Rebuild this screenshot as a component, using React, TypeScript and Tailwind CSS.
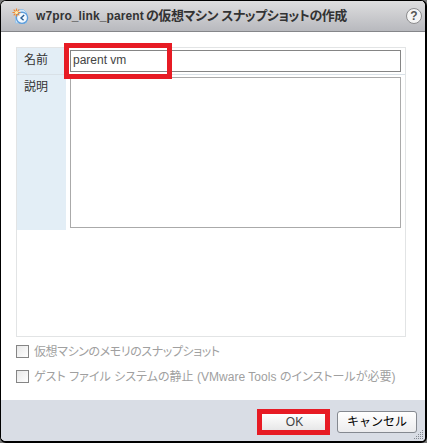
import type { ReactNode } from 'react';

function SnapshotIcon() {
  return (
    <svg width="17" height="17" viewBox="0 0 17 17" className="shrink-0">
      <path d="M6 1.5h5.5l3 3V15H3.5V7" fill="#d3e7f8" stroke="#9cc5e8" />
      <circle cx="10" cy="9.8" r="5.6" fill="#f2f9ff" stroke="#5d9ddb" strokeWidth="1.4" />
      <path d="M12.2 7 9 9.9l2.6 2.3" fill="none" stroke="#2c5f94" strokeWidth="1.4" />
      <path d="M4.5.5v8M.5 4.5h8M1.7 1.7l5.6 5.6M7.3 1.7 1.7 7.3" stroke="#ee8730" strokeWidth="1.2" />
      <circle cx="4.5" cy="4.5" r="1.6" fill="#fff0b0" />
    </svg>
  );
}

function Option({ children }: { children: ReactNode }) {
  return (
    <label className="flex h-[13px] items-center whitespace-nowrap text-[12px] text-[#a0a0a0] [font-feature-settings:'palt']">
      <span className="mr-[5px] size-[13px] shrink-0 border border-[#858585] bg-linear-to-br from-[#e8e8e8] to-white" />
      {children}
    </label>
  );
}

export default function App() {
  return (
    <div className="h-[443px] w-[427px] overflow-hidden bg-[#777] font-['Liberation_Sans','Noto_Sans_CJK_JP',sans-serif]">
      <div className="flex h-[443px] w-[427px] flex-col overflow-hidden rounded-[6px] border border-r-2 border-b-2 border-black bg-white">
        <header className="flex h-[31px] shrink-0 items-center border-b border-[#85868a] bg-linear-to-b from-[#dededf] to-[#b8b9be] pr-[3px] pl-[11px]">
          <SnapshotIcon />
          <h1 className="ml-[7px] flex whitespace-nowrap text-[12px] leading-[18px] font-bold text-[#333]">
            <span className="w-[110px] tracking-[0.1px]">w7pro_link_parent</span>
            <span className="text-[13px] tracking-[-0.45px] [font-feature-settings:'palt']">の仮想マシン スナップショットの作成</span>
          </h1>
          <span className="ml-auto flex size-[16px] items-center justify-center rounded-full border border-[#8b8b8d] bg-[#f5f5f5] text-[12px] leading-none font-bold text-[#555]">?</span>
        </header>

        <main className="h-[368px] shrink-0 pt-[15px] pl-[15px]">
          <div className="h-[290px] w-[390px] border border-[#e2e4e5]">
            <div className="flex h-[27px] border-b border-[#d9e1e7]">
              <span className="w-[49px] bg-[#e3eef6] pl-[7px] text-[12px] leading-[24px] text-[#333]">名前</span>
              <div className="relative ml-[4px] pt-[2px]">
                <div className="h-[22px] w-[331px] border border-[#858585] pl-[2px] text-[12px] leading-[18px] text-[#444]">parent vm</div>
                <div className="absolute top-[-5px] left-[-6px] h-[36px] w-[108px] border-[5px] border-[#e71b24]" />
              </div>
            </div>
            <div className="flex h-[155px]">
              <span className="w-[49px] bg-[#e3eef6] pl-[7px] text-[12px] leading-[24px] text-[#333]">説明</span>
              <div className="mt-[2px] ml-[4px] h-[151px] w-[331px] border border-[#aaa]" />
            </div>
          </div>
          <div className="mt-[8px] flex flex-col gap-[12px]">
            <Option><span className="tracking-[-0.4px]">仮想マシンのメモリのスナップショット</span></Option>
            <Option><span className="tracking-[0.03px]">ゲスト ファイル システムの静止 (VMware Tools のインストールが必要)</span></Option>
          </div>
        </main>

        <footer className="relative flex flex-1 items-start justify-end bg-[#d9dde5] pt-[9px] pr-[8px]">
          <button className="flex h-[26px] w-[73px] items-center justify-center border-[5px] border-[#e71b24] bg-linear-to-b from-white to-[#e7e7e8] pl-[2px] text-[12px] text-[#444]">OK</button>
          <button className="mt-[2px] ml-[7px] flex h-[22px] w-[80px] items-center justify-center rounded-[3px] border border-[#858990] bg-linear-to-b from-white to-[#ececee] text-[12px] text-black">キャンセル</button>
          <svg className="absolute right-[1px] bottom-[1px]" width="11" height="11" viewBox="0 0 11 11">
            <path d="M9 1.5h1M7 3.5h3M5 5.5h5M3 7.5h7M1 9.5h9" stroke="#858a92" strokeDasharray="1 1" />
          </svg>
        </footer>
      </div>
    </div>
  );
}
